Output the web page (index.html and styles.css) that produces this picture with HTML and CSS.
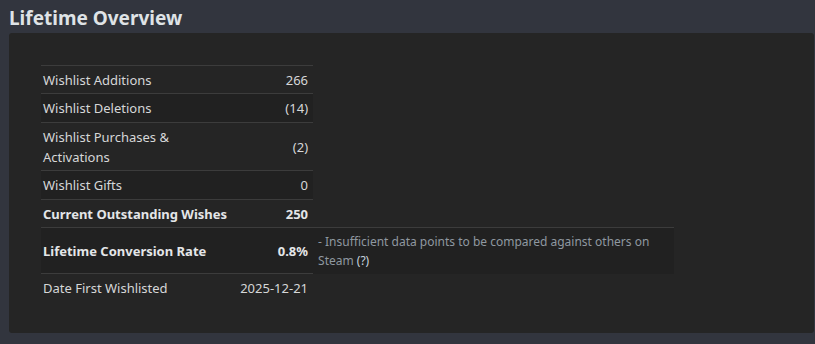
FILE: index.html
```html
<!DOCTYPE html>
<html lang="en">
<head>
    <meta charset="UTF-8">
    <meta name="viewport" content="width=device-width, initial-scale=1.0">
    <title>Lifetime Overview</title>
    <link rel="stylesheet" href="styles.css">
</head>
<body>

    <h2 class="section-title">Lifetime Overview</h2>

    <div class="panel">
        <!-- Resumen de la lista de deseos -->
        <table class="stats">
            <tr>
                <td class="stats__label">Wishlist Additions</td>
                <td class="stats__value">266</td>
            </tr>
            <tr class="stats__row--alt">
                <td class="stats__label">Wishlist Deletions</td>
                <td class="stats__value">(14)</td>
            </tr>
            <tr>
                <td class="stats__label">Wishlist Purchases &amp; Activations</td>
                <td class="stats__value">(2)</td>
            </tr>
            <tr class="stats__row--alt">
                <td class="stats__label">Wishlist Gifts</td>
                <td class="stats__value">0</td>
            </tr>
            <tr class="stats__row--bold">
                <td class="stats__label">Current Outstanding Wishes</td>
                <td class="stats__value">250</td>
            </tr>
            <tr class="stats__row--alt stats__row--bold stats__row--tall">
                <td class="stats__label">Lifetime Conversion Rate</td>
                <td class="stats__value">0.8%</td>
                <td class="stats__note">- Insufficient data points to be compared against others on Steam <span class="stats__help">(?)</span></td>
            </tr>
            <tr>
                <td class="stats__label">Date First Wishlisted</td>
                <td class="stats__value">2025-12-21</td>
            </tr>
        </table>
    </div>

</body>
</html>
```

FILE: styles.css
```css
body {
    margin: 0;
    padding: 0;
    background-color: #32353e;
    font-family: 'Noto Sans', 'Open Sans', sans-serif;
    color: #d6d7d8;
    height: 344px;
    overflow: hidden;
}

.section-title {
    margin: 0;
    padding: 6px 9px 0;
    font-size: 19px;
    line-height: 24px;
    font-weight: bold;
    color: #dfe3e6;
}

.panel {
    margin: 3px 1px 0 9px;
    padding: 32px;
    height: 236px;
    background-color: #252525;
    border-radius: 3px;
}

.stats {
    border-collapse: collapse;
    font-size: 13px;
    line-height: 20px;
}

.stats td {
    padding: 4px 5px 3px 2px;
    border-top: 1px solid #3c3c3c;
    vertical-align: middle;
}

.stats__label {
    width: 183px;
}

.stats__value {
    width: 74px;
    text-align: right;
    white-space: nowrap;
}

.stats__row--alt td {
    padding-bottom: 4px;
    background-color: #212121;
}

.stats__row--bold td {
    font-weight: bold;
    color: #e4e6e8;
}

.stats__row--bold .stats__label {
    white-space: nowrap;
}

.stats__row--tall td {
    padding-top: 13px;
    padding-bottom: 12px;
}

.stats .stats__note {
    width: 356px;
    padding: 2px 0 2px 5px;
    font-size: 12px;
    line-height: 19px;
    font-weight: normal;
    color: #8f98a0;
    vertical-align: middle;
}

.stats__help {
    color: #c6d4df;
}
```
